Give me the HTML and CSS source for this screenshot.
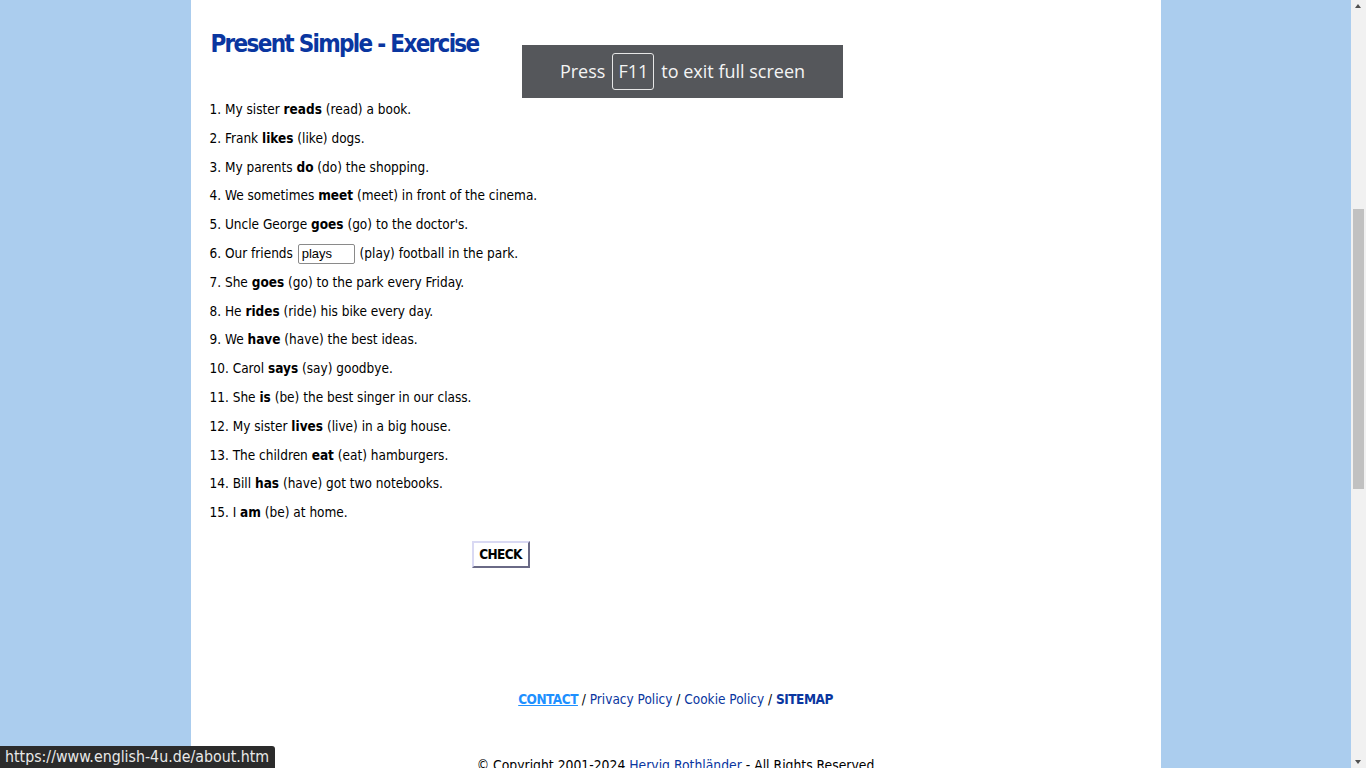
FILE: index.html
```html
<!DOCTYPE html>
<html lang="en">
<head>
<meta charset="utf-8">
<title>Present Simple - Exercise</title>
<link rel="stylesheet" href="styles.css">
</head>
<body>
<div class="page">
  <main class="content">
    <h1 class="title">Present Simple - Exercise</h1>
    <form class="exercise">
      <p>1. My sister <b>reads</b> (read) a book.</p>
      <p>2. Frank <b>likes</b> (like) dogs.</p>
      <p>3. My parents <b>do</b> (do) the shopping.</p>
      <p>4. We sometimes <b>meet</b> (meet) in front of the cinema.</p>
      <p>5. Uncle George <b>goes</b> (go) to the doctor's.</p>
      <p>6. Our friends <input class="gap" type="text" value="plays"> (play) football in the park.</p>
      <p>7. She <b>goes</b> (go) to the park every Friday.</p>
      <p>8. He <b>rides</b> (ride) his bike every day.</p>
      <p>9. We <b>have</b> (have) the best ideas.</p>
      <p>10. Carol <b>says</b> (say) goodbye.</p>
      <p>11. She <b>is</b> (be) the best singer in our class.</p>
      <p>12. My sister <b>lives</b> (live) in a big house.</p>
      <p>13. The children <b>eat</b> (eat) hamburgers.</p>
      <p>14. Bill <b>has</b> (have) got two notebooks.</p>
      <p>15. I <b>am</b> (be) at home.</p>
      <div class="actions"><button type="button" class="check">CHECK</button></div>
    </form>
  </main>
  <footer class="footer">
    <nav class="links"><a class="contact" href="#">CONTACT</a> / <a href="#">Privacy Policy</a> / <a href="#">Cookie Policy</a> / <a class="sitemap" href="#">SITEMAP</a></nav>
    <p class="copy">© Copyright 2001-2024 <a href="#">Hervig Rothländer</a> - All Rights Reserved</p>
  </footer>
</div>
<div class="fs-note">Press <span class="key">F11</span> to exit full screen</div>
<div class="status">https://www.english-4u.de/about.htm</div>
<div class="scrollbar">
  <span class="arrow up"></span>
  <span class="thumb"></span>
  <span class="arrow down"></span>
</div>
</body>
</html>
```
FILE: styles.css
```css
html {
  background: #abcdee;
}
body {
  margin: 0 15px 0 0;
  background: #abcdee;
  font-family: "DejaVu Sans Condensed", "DejaVu Sans", sans-serif;
  font-size: 13.5px;
  color: #000;
}
.page {
  width: 970px;
  margin: 0 auto;
  background: #fff;
  min-height: 1100px;
}
.content {
  padding: 0 19px;
}
.title {
  margin: 0;
  padding-top: 27px;
  height: 95px;
  box-sizing: border-box;
  line-height: 34px;
  font-size: 24px;
  font-weight: bold;
  color: #0a36a0;
  letter-spacing: -1.7px;
  padding-left: 1px;
}
.exercise p {
  margin: 0;
  height: 28.8px;
  line-height: 28.8px;
}
.gap {
  width: 57px;
  height: 20px;
  box-sizing: border-box;
  padding: 0 3px;
  border: 1px solid #8a8a8a;
  border-radius: 2px;
  font-family: "Liberation Sans", Arial, sans-serif;
  font-size: 13px;
  vertical-align: middle;
  margin: 0 1px;
}
.actions {
  width: 582px;
  padding-top: 14px;
  display: flex;
  justify-content: center;
}
.check {
  font-family: "DejaVu Sans Condensed", "DejaVu Sans", sans-serif;
  font-weight: bold;
  font-size: 13.5px;
  letter-spacing: -0.6px;
  background: #fff;
  color: #000;
  height: 27px;
  width: 58px;
  padding: 0;
  border: 2px solid;
  border-color: #d9d9f3 #6a6a86 #6a6a86 #d9d9f3;
}
.footer {
  text-align: center;
  padding-top: 122px;
}
.links {
  color: #000;
  line-height: 18px;
}
.links a {
  color: #0a36a0;
  text-decoration: none;
}
.links a.contact {
  color: #1e90ff;
  font-weight: bold;
  text-decoration: underline;
  letter-spacing: -0.5px;
}
.links a.sitemap {
  font-weight: bold;
  letter-spacing: -0.5px;
}
.copy {
  margin: 0;
  padding-top: 49px;
  line-height: 17px;
  font-size: 13.8px;
}
.copy a {
  color: #0a36a0;
  text-decoration: none;
}
.fs-note {
  position: fixed;
  left: 522px;
  top: 45px;
  width: 321px;
  height: 53px;
  background: #55575b;
  color: #f4f4f4;
  font-family: "Open Sans", "DejaVu Sans", sans-serif;
  font-size: 18px;
  display: flex;
  align-items: center;
  justify-content: center;
  gap: 7px;
  padding-bottom: 1px;
  box-sizing: border-box;
}
.key {
  border: 1px solid #e6e6e6;
  border-radius: 3px;
  height: 37px;
  width: 42px;
  box-sizing: border-box;
  display: flex;
  align-items: center;
  justify-content: center;
}
.status {
  position: fixed;
  left: 0;
  bottom: 0;
  width: 275px;
  height: 22px;
  box-sizing: border-box;
  padding-left: 5px;
  background: #2b2b2b;
  color: #e8e8e8;
  border-top-right-radius: 3px;
  font-family: "DejaVu Sans Condensed", "DejaVu Sans", sans-serif;
  font-size: 15.8px;
  line-height: 22px;
  white-space: nowrap;
  overflow: hidden;
}
.scrollbar {
  position: fixed;
  top: 0;
  right: 0;
  width: 15px;
  height: 768px;
  background: #f1f1f1;
}
.thumb {
  position: absolute;
  left: 2px;
  top: 209px;
  width: 11px;
  height: 280px;
  background: #c1c1c1;
}
.arrow {
  position: absolute;
  left: 4px;
  width: 0;
  height: 0;
  border-left: 3.5px solid transparent;
  border-right: 3.5px solid transparent;
}
.arrow.up {
  top: 4px;
  border-bottom: 4px solid #505050;
}
.arrow.down {
  bottom: 4px;
  border-top: 4px solid #505050;
}
```
